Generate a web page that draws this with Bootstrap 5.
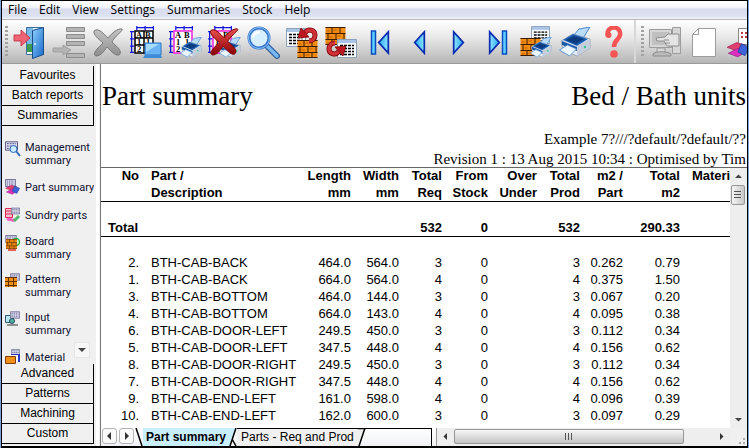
<!DOCTYPE html>
<html lang="en">
<head>
<meta charset="utf-8">
<meta name="viewport" content="width=device-width, initial-scale=1">
<title>Part summary</title>
<link href="https://cdn.jsdelivr.net/npm/bootstrap@5.3.0/dist/css/bootstrap.min.css" rel="stylesheet">
<style>
body{font-family:"Liberation Sans",Arial,sans-serif;font-size:13px;line-height:17px;color:#000;background:#000}
button{color:#000}
.app-frame{border:solid #7fa3d0;border-width:0 1px;background:#000;padding:1px 1px 2px}
.app-body{background:#f0f0f0}
.menu-bar{background:linear-gradient(#fff 0,#f4f6fb 35%,#d8dcee 45%,#dde2f2 85%,#f4f5fa 100%);border-bottom:1px solid #b8b8b8;font-family:"Open Sans","Noto Sans",sans-serif;font-size:12px;line-height:18px}
.menu-bar .btn{font:inherit;padding:0 6px;border:0;border-radius:0;color:#000}
.tool-bar{background:linear-gradient(#fff 0,#e9e9e9 40%,#b6b6b6 100%);height:44px;border-bottom:1px solid #9a9a9a}
.tool-bar .btn{width:39px;padding:2px 2px 0;border:0;border-radius:0;line-height:0;flex:none}
.tool-bar svg{width:34px;height:34px}
.grip{width:3px;height:32px;margin:0 1px 0 5px;background:repeating-linear-gradient(#a2a2a2 0 2px,transparent 2px 4px);flex:none}
.grip-first{margin-left:3px;margin-right:2px}
.bar-split{width:2px;background:#d8d8d8;flex:none}
.side-panel{width:93px;flex:none;padding:2px 0;border-right:1px solid #f0f0f0}
.side-panel .group-btn{font-size:12px;line-height:19px;text-align:center;background:#f0f0f0;border:0;border-bottom:1px solid #000;border-right:1px solid #000;padding:0;height:20px;flex:none}
.side-list{padding:15px 0 0 3px;gap:12px;background:#f0f0f0;min-height:0}
.side-list a{font-size:11px;line-height:13px;color:#101030;text-decoration:none;min-height:16px;gap:4px;flex:none;font-family:Roboto,"Liberation Sans",sans-serif;white-space:nowrap}
.side-list svg{width:16px;height:16px;flex:none}
.side-more{right:4px;bottom:6px;width:16px;height:16px;background:#f7f7f7;border:1px solid #e6e6e6;padding:0;line-height:0}
.splitter{width:6px;flex:none;background:linear-gradient(90deg,#f0f0f0 0 1px,#fff 1px 4px,#f0f0f0 4px);border-right:1px solid #777}
.report-head{font-family:"Liberation Serif","Times New Roman",serif;font-size:15px;line-height:20px;white-space:nowrap;padding:0 1px;margin-bottom:-2px}
.report-head h1{font-size:27px;line-height:33px;font-weight:400;margin:0}
.head-titles{padding:16px 0}
.report-body{border-top:1px solid #666;min-height:0}
.report-table{width:100%;table-layout:fixed;border-collapse:separate;border-spacing:0;text-align:right;white-space:nowrap;margin-top:-1px}
.report-table th,.report-table td{padding:0;line-height:17px}
.report-table .to-left{text-align:left;padding-left:12px}
.report-table thead th{border-bottom:1px solid #000}
.report-table .sum-row>*{padding-top:17px;border-bottom:1px solid #000;font-weight:700}
.report-table .sum-row th{text-align:left;padding-left:7px}
.report-table .first-row>*{padding-top:17px}
.scroll-v{width:17px;flex:none;background:#eee}
.scroll-btn{width:17px;height:17px;border:0;padding:0;background:none;line-height:0;flex:none}
.thumb{border:1px solid #979797;border-radius:2px;background:linear-gradient(90deg,#f6f6f6,#dedede 50%,#c8c8c8);padding:0;line-height:0}
.thumb-v{width:14px;height:20px;margin-left:1px}
.thumb-h{background:linear-gradient(#f6f6f6,#dcdcdc 50%,#c4c4c4);height:15px;margin:1px 29px 0 0}
.foot-row{height:18px;flex:none;background:#f0f0f0}
.sheet-nav{width:335px;flex:none;background:linear-gradient(#fff,#f0f2f6);font-size:12px}
.sheet-nav .step{width:15px;height:16px;border:1px solid #b4b4b4;border-radius:3px;background:#fafafa;padding:0;line-height:0;margin-left:1px;margin-right:1px}
.sheet-nav .tab-btn{border:0;padding:0 3px;font-size:12px;line-height:17px;background:#f0f0f0;white-space:nowrap}
.sheet-nav .tab-on{font-weight:700;background:#c9eefc}
.sheet-nav .tab-off{border-top:1px solid #000;padding:0 4px}
.sheet-end{border-top:1px solid #000;border-right:1px solid #000}
.slant{width:8px;height:18px;flex:none}
.scroll-h{min-width:0;border-left:1px solid #999;background:#eee}
.corner{width:17px;flex:none}
</style>
<script src="https://cdn.jsdelivr.net/npm/bootstrap@5.3.0/dist/js/bootstrap.bundle.min.js"></script>
</head>
<body>
<svg width="0" height="0" class="position-absolute" aria-hidden="true">
<defs>
<linearGradient id="gBlue" x1="0" y1="0" x2="1" y2="1"><stop offset="0" stop-color="#8fd0ff"/><stop offset="1" stop-color="#1668c8"/></linearGradient>
<linearGradient id="gArrow" x1="0" y1="0" x2="1" y2="0"><stop offset="0" stop-color="#28a8f4"/><stop offset="1" stop-color="#8ee6ff"/></linearGradient>
<linearGradient id="gGrey" x1="0" y1="0" x2="0" y2="1"><stop offset="0" stop-color="#c4c4c4"/><stop offset="1" stop-color="#8e8e8e"/></linearGradient>
<linearGradient id="gRed" x1="0" y1="0" x2="0" y2="1"><stop offset="0" stop-color="#e85050"/><stop offset="1" stop-color="#8c0000"/></linearGradient>
<symbol id="brick" viewBox="0 0 20 18"><path fill="#f08c14" d="M0 0h20v18H0z"/><path d="M0 .5h20M0 6.5h20M0 12.5h20M0 17.5h20M6.5 0v6M14.5 0v6M2.500 6v6M10.500 6v6M18.500 6v6M6.500 12v6M14.500 12v6" stroke="#3c1c00" fill="none"/><path d="M1 4h3M8 3h3M4 10h3M12 9h3M1 16h3M8 15h4" stroke="#c45e00"/></symbol>
<symbol id="sheet" viewBox="0 0 20 19"><path fill="#f8fbff" stroke="#8ca0b8" d="M.5.5h19v18H.5z"/><path fill="#a9c4e4" d="M1 1h18v3H1z"/><path d="M3 6.500h14M3 9.500h14M3 12.500h14M3 15.500h14" stroke="#000" stroke-width="1.500" stroke-dasharray="3 1"/></symbol>
<symbol id="printer" viewBox="0 0 32 30"><path fill="#b9dcfa" stroke="#4a88cc" d="M14 9 20 2l11-2-8 13z"/><path fill="#e4ecf6" stroke="#8a98aa" stroke-width=".8" d="m2 14 12-7 17 5v9L18 29 4 23z"/><path fill="#1b5fb0" d="m4 13 10-6 15 5-11 7z"/><path fill="#0c3c80" d="m7 13 8-4 10 3-8 5z"/><path fill="#c4cedc" d="m18 19 13-7v9l-13 8z"/><path fill="#1c58a4" d="m3 14 15 6v4L3 18z"/><path fill="#e9f5ff" stroke="#4a88cc" stroke-width=".8" d="m.5 23 8-5 9 4-7 7z"/><circle cx="26" cy="20" r="1.200" fill="#3c8"/></symbol>
<symbol id="grid2" viewBox="0 0 24 27"><path d="M6 1.500h17M6.500 0v4M14.500 0v4M22.500 0v4M1.500 5v21M0 5.500h4M0 12.500h4M0 19.500h4M0 25.500h4" stroke="#1414e0" stroke-width="1.200" fill="none"/></symbol>
<symbol id="letters" viewBox="0 0 20 22"><g font-family="Liberation Serif,serif" font-weight="700" font-size="8.500"><text x="2" y="7">A</text><text x="11" y="7">B</text><text x="3" y="14">1</text><text x="12" y="14">1</text><text x="3" y="21">2</text></g></symbol>
<symbol id="cross" viewBox="0 0 32 29"><path d="M2 3C6-1 12 6 16 10 20 5 26 0 30 1c2 1-8 8-10 13 4 4 10 8 8 12-3 4-9-3-13-7-3 4-6 9-11 9-5-2 3-9 7-13C7 11 1 7 2 3z"/></symbol>
<symbol id="tri" viewBox="0 0 13 26"><path fill="url(#gArrow)" stroke="#0a2cae" stroke-width="1.800" d="M11.500 2v22L1.500 13z"/></symbol>
<symbol id="curve" viewBox="0 0 20 18"><path d="M7 6C10 1 17 3 17 8c0 4-3 6-6 6" fill="none" stroke="#7c0808" stroke-width="5"/><path d="M7 6C10 1 17 3 17 8c0 4-3 6-6 6" fill="none" stroke="#d03038" stroke-width="3.400"/><path fill="#c01820" stroke="#7c0808" stroke-width=".8" d="M0 11 3 1l8 9z"/></symbol>
<symbol id="mini" viewBox="0 0 14 10"><path fill="#e4e4f8" stroke="#505078" d="M.5.5h13v9H.5z"/><path d="M2 2.500h10M2 5h10M2 7.500h10" stroke="#404070" stroke-dasharray="2 1"/></symbol>
<symbol id="books" viewBox="0 0 20 16"><path fill="#e04070" stroke="#9c2050" stroke-width=".6" d="m0 7 8-4 7 2-7 5z"/><path fill="#e030c0" stroke="#8c1c80" stroke-width=".6" d="m1 12 8-4 8 2-8 5z"/><path fill="#3c64d8" stroke="#203c90" stroke-width=".6" d="m12 4 7 3-4 7-6-3z"/></symbol>
</defs>
</svg>

<div class="app-frame vh-100 overflow-hidden">
<div class="app-body h-100 d-flex flex-column overflow-hidden">

<nav class="menu-bar d-flex" aria-label="Main menu">
<button class="btn" type="button">File</button>
<button class="btn" type="button">Edit</button>
<button class="btn" type="button">View</button>
<button class="btn" type="button">Settings</button>
<button class="btn" type="button">Summaries</button>
<button class="btn" type="button">Stock</button>
<button class="btn" type="button">Help</button>
</nav>

<div class="tool-bar d-flex align-items-center overflow-hidden flex-shrink-0" role="toolbar" aria-label="Tools">
<span class="grip grip-first"></span>
<button class="btn" type="button" aria-label="Exit"><svg viewBox="0 0 34 34"><path fill="#e9f4ff" stroke="#3a6c9c" d="M13.500 1.500h17v27h-17z"/><path fill="#78b8e8" d="M14 2h6v16h-6z"/><path fill="#3c9c50" d="M14 18h5v8h-5z"/><path fill="url(#gBlue)" stroke="#174f86" d="m19.500 4.500 11-3v27l-11 4z"/><circle cx="22" cy="18" r="1" fill="#e0f0ff"/><path fill="#ee6474" stroke="#c83c4c" d="M1 9h7V4l9 8-9 8v-5H1z"/></svg></button>
<button class="btn" type="button" aria-label="Insert"><svg viewBox="0 0 34 34"><g fill="#b4b4b4" stroke="#8c8c8c"><path d="M14.500 1.500h18v4h-18zM14.500 8.500h18v4h-18zM14.500 15.500h18v4h-18zM14.500 27.500h18v4h-18z"/></g><path fill="#b4b4b4" stroke="#a0a0a0" d="M1 22h10v-3l8 5-8 5v-3H1z"/></svg></button>
<button class="btn" type="button" aria-label="Delete"><svg viewBox="0 0 34 34"><use href="#cross" x="1" y="2" width="32" height="29" fill="url(#gGrey)" stroke="#787878"/></svg></button>
<button class="btn" type="button" aria-label="View parts"><svg viewBox="0 0 34 34"><use href="#grid2" x="0" y="0" width="25" height="28"/><path fill="#fff" stroke="#000" stroke-width="1.500" d="M5 5h18v22H5zM14 5v22M5 12h18M5 19h18"/><use href="#letters" x="4" y="5" width="20" height="22"/><path fill="#6bb4f4" stroke="#2a78c8" d="M15 17h16v12H15z"/><path fill="#a8dcff" d="m16 18h13L16 26z"/><path fill="#3c8cd8" d="m15 29h16l1 3H13z"/></svg></button>
<button class="btn" type="button" aria-label="Print parts"><svg viewBox="0 0 34 34"><use href="#grid2" x="0" y="0" width="25" height="28"/><path fill="#fff" stroke="#f020e0" stroke-width="1.500" d="M5 5h18v22H5z"/><use href="#letters" x="4" y="5" width="20" height="22"/><use href="#printer" x="11" y="11" width="22" height="21"/></svg></button>
<button class="btn" type="button" aria-label="Cancel print"><svg viewBox="0 0 34 34"><use href="#grid2" x="0" y="0" width="25" height="28"/><path fill="#fff" stroke="#f020e0" stroke-width="1.500" d="M5 5h18v22H5z"/><use href="#letters" x="4" y="5" width="20" height="22"/><use href="#printer" x="11" y="11" width="22" height="21"/><use href="#cross" x="0" y="2" width="32" height="28" fill="url(#gRed)" stroke="#780000"/></svg></button>
<button class="btn" type="button" aria-label="Find"><svg viewBox="0 0 34 34"><path d="m19 19 11 11" stroke="#2c5c9c" stroke-width="6" stroke-linecap="round"/><path d="m19 19 11 11" stroke="#78b8f0" stroke-width="3.500" stroke-linecap="round"/><circle cx="12" cy="12" r="10" fill="#d8efff" stroke="#3474cc" stroke-width="3"/><circle cx="12" cy="12" r="10.500" fill="none" stroke="#8cc4f8"/><path d="M6 11c1-4 4-5 7-5" stroke="#fff" stroke-width="2.500" fill="none"/></svg></button>
<button class="btn" type="button" aria-label="List to pattern"><svg viewBox="0 0 34 34"><use href="#sheet" x="0" y="2" width="20" height="19"/><use href="#brick" x="11" y="14" width="21" height="18"/><use href="#curve" x="12" y="1" width="20" height="18"/></svg></button>
<button class="btn" type="button" aria-label="Pattern to list"><svg viewBox="0 0 34 34"><use href="#brick" x="0" y="1" width="21" height="18"/><use href="#sheet" x="12" y="13" width="20" height="19"/><use href="#curve" x="1" y="13" width="20" height="18" transform="rotate(180 11 22)"/></svg></button>
<button class="btn" type="button" aria-label="First"><svg viewBox="0 0 34 34"><path fill="#5cd0ff" stroke="#0a4cc0" stroke-width="1.500" d="M7.500 5h4v23h-4z"/><use href="#tri" x="13" y="4" width="13" height="25"/></svg></button>
<button class="btn" type="button" aria-label="Previous"><svg viewBox="0 0 34 34"><use href="#tri" x="10" y="4" width="13" height="25"/></svg></button>
<button class="btn" type="button" aria-label="Next"><svg viewBox="0 0 34 34"><use href="#tri" x="10" y="4" width="13" height="25" transform="rotate(180 16.500 16.500)"/></svg></button>
<button class="btn" type="button" aria-label="Last"><svg viewBox="0 0 34 34"><use href="#tri" x="13" y="4" width="13" height="25" transform="rotate(180 16.500 16.500)"/><path fill="#5cd0ff" stroke="#0a4cc0" stroke-width="1.500" d="M21.500 5h4v23h-4z"/></svg></button>
<button class="btn" type="button" aria-label="Print pattern"><svg viewBox="0 0 34 34"><use href="#sheet" x="10" y="0" width="21" height="18"/><use href="#brick" x="0" y="12" width="21" height="18"/><use href="#printer" x="10" y="11" width="22" height="21"/></svg></button>
<button class="btn" type="button" aria-label="Print"><svg viewBox="0 0 34 34"><use href="#printer" x="0" y="1" width="32" height="30"/></svg></button>
<button class="btn" type="button" aria-label="Help topics"><svg viewBox="0 0 34 34"><path d="M10 10c-3-11 14-11 12-1-1 5-6 5-6 12" fill="none" stroke="#f85454" stroke-width="4.500"/><circle cx="10.500" cy="9" r="3" fill="#f85454"/><circle cx="16" cy="28" r="3.800" fill="#f85454"/></svg></button>
<span class="bar-split align-self-stretch"></span>
<span class="grip"></span>
<button class="btn" type="button" aria-label="Screen"><svg viewBox="0 0 34 34"><path fill="#d6d6d6" stroke="#9c9c9c" d="M1.500 3.500h22v18h-22zM24.500 1.500h8v26h-8zM9 22h8v5H9z"/><path fill="#c0c0c0" d="M4 6h17v13H4z"/><path fill="#bbb" stroke="#8c8c8c" d="M5 28c2-3 14-3 18 0v2H5z"/><path fill="#e4e4e4" stroke="#8c8c8c" d="m8 12 9-1 3-3h11v12H19l-3-5H9z"/><path d="M16 14h5M17 17h5" stroke="#8c8c8c"/></svg></button>
<button class="btn" type="button" aria-label="New page"><svg viewBox="0 0 34 34"><path fill="#fff" stroke="#9c9c9c" d="M11.500 2.500h17v28h-23v-22zM11.500 2.500v6h-6"/></svg></button>
<button class="btn" type="button" aria-label="Library"><svg viewBox="0 0 34 34"><path fill="#fff" stroke="#888" d="M12.500 2.500h18v16h-18z"/><path d="M15 7h12M15 11h12" stroke="#c03c3c" stroke-width="2" stroke-dasharray="2 2"/><use href="#books" x="1" y="13" width="24" height="19"/></svg></button>
</div>

<div class="d-flex flex-grow-1 overflow-hidden">
<aside class="side-panel d-flex flex-column">
<button class="group-btn" type="button">Favourites</button>
<button class="group-btn" type="button">Batch reports</button>
<button class="group-btn" type="button">Summaries</button>
<div class="side-list d-flex flex-column flex-grow-1 overflow-hidden position-relative">
<a class="d-flex" href="#"><svg viewBox="0 0 16 16"><use href="#mini" x="0" width="13" height="10"/><circle cx="8.500" cy="8" r="3.500" fill="#c8ecff" stroke="#2c6cb8"/><path d="m11 10 4 5" stroke="#2c6cb8" stroke-width="2"/></svg><span>Management<br>summary</span></a>
<a class="d-flex align-items-center" href="#"><svg viewBox="0 0 16 16"><use href="#mini" x="0" width="11" height="8"/><use href="#books" y="4" width="16" height="12"/></svg><span>Part summary</span></a>
<a class="d-flex align-items-center" href="#"><svg viewBox="0 0 16 16"><path fill="#f8c0d0" stroke="#d82850" d="M.5 1.500h7v9h-7z"/><path d="M2 3v6M4 3v6M6 3v6" stroke="#d82850" stroke-dasharray="2 1"/><use href="#mini" x="6" width="9" height="8"/><path d="M2 13c4-3 6 3 8-1" stroke="#f060c0" stroke-width="3" fill="none"/><path d="m9 14 5-5" stroke="#50b868" stroke-width="3"/></svg><span>Sundry parts</span></a>
<a class="d-flex" href="#"><svg viewBox="0 0 16 16"><use href="#mini" width="12" height="8"/><circle cx="11" cy="7" r="3.500" fill="#d4ffd4" stroke="#30b040" stroke-width="1.500"/><use href="#brick" x="1" y="4" width="11" height="10"/><path d="M3 15h8" stroke="#e03020" stroke-width="1.500"/></svg><span>Board<br>summary</span></a>
<a class="d-flex" href="#"><svg viewBox="0 0 16 16"><use href="#mini" x="5" width="10" height="8"/><path fill="#f09018" d="M0 4h12v10H0z"/><path d="M0 4.500h12M0 8.500h12M0 12.500h12M3.500 4v10M8.500 4v10" stroke="#603000"/></svg><span>Pattern<br>summary</span></a>
<a class="d-flex" href="#"><svg viewBox="0 0 16 16"><path fill="#b8e8f0" stroke="#305878" d="M.5 4.500h8v7h-8z"/><use href="#mini" x="5" width="10" height="8"/><circle cx="7" cy="10" r="2.500" fill="#50b0a0" stroke="#284868"/><path d="M2 14h11" stroke="#909090" stroke-width="2"/></svg><span>Input<br>summary</span></a>
<a class="d-flex align-items-center" href="#"><svg viewBox="0 0 16 16"><use href="#mini" x="6" width="9" height="7"/><path fill="#2838c0" d="M6 5h9v8H6z"/><path fill="#fff" d="M5 6h8v7H5z"/><path fill="#f09018" stroke="#804000" d="M.5 7.500h10v7H.5z"/></svg><span>Material</span></a>
<button class="side-more position-absolute" type="button" aria-label="More"><svg width="14" height="14"><path fill="#444" d="M3 5h8l-4 4z"/></svg></button>
</div>
<button class="group-btn" type="button">Advanced</button>
<button class="group-btn" type="button">Patterns</button>
<button class="group-btn" type="button">Machining</button>
<button class="group-btn" type="button">Custom</button>
</aside>
<div class="splitter"></div>

<main class="d-flex flex-column flex-grow-1 overflow-hidden bg-white">
<header class="report-head flex-shrink-0">
<div class="head-titles d-flex justify-content-between"><h1>Part summary</h1><h1>Bed / Bath units</h1></div>
<div class="text-end">Example 7?///?default/?default/??</div>
<div class="text-end">Revision 1 : 13 Aug 2015 10:34 : Optimised by Tim</div>
</header>

<div class="report-body d-flex flex-grow-1 overflow-hidden">
<div class="flex-grow-1 overflow-hidden">
<table class="report-table">
<colgroup><col style="width:38px"><col><col style="width:48px"><col style="width:48px"><col style="width:43px"><col style="width:46px"><col style="width:49px"><col style="width:43px"><col style="width:43px"><col style="width:57px"><col style="width:50px"></colgroup>
<thead><tr><th class="align-top">No</th><th class="to-left">Part /<br>Description</th><th>Length<br>mm</th><th>Width<br>mm</th><th>Total<br>Req</th><th>From<br>Stock</th><th>Over<br>Under</th><th>Total<br>Prod</th><th>m2 /<br>Part</th><th>Total<br>m2</th><th class="to-left align-top">Materi</th></tr></thead>
<tbody>
<tr class="sum-row"><th colspan="2">Total</th><td></td><td></td><td>532</td><td>0</td><td></td><td>532</td><td></td><td>290.33</td><td></td></tr>
<tr class="first-row"><td>2.</td><td class="to-left">BTH-CAB-BACK</td><td>464.0</td><td>564.0</td><td>3</td><td>0</td><td></td><td>3</td><td>0.262</td><td>0.79</td><td></td></tr>
<tr><td>1.</td><td class="to-left">BTH-CAB-BACK</td><td>664.0</td><td>564.0</td><td>4</td><td>0</td><td></td><td>4</td><td>0.375</td><td>1.50</td><td></td></tr>
<tr><td>3.</td><td class="to-left">BTH-CAB-BOTTOM</td><td>464.0</td><td>144.0</td><td>3</td><td>0</td><td></td><td>3</td><td>0.067</td><td>0.20</td><td></td></tr>
<tr><td>4.</td><td class="to-left">BTH-CAB-BOTTOM</td><td>664.0</td><td>143.0</td><td>4</td><td>0</td><td></td><td>4</td><td>0.095</td><td>0.38</td><td></td></tr>
<tr><td>6.</td><td class="to-left">BTH-CAB-DOOR-LEFT</td><td>249.5</td><td>450.0</td><td>3</td><td>0</td><td></td><td>3</td><td>0.112</td><td>0.34</td><td></td></tr>
<tr><td>5.</td><td class="to-left">BTH-CAB-DOOR-LEFT</td><td>347.5</td><td>448.0</td><td>4</td><td>0</td><td></td><td>4</td><td>0.156</td><td>0.62</td><td></td></tr>
<tr><td>8.</td><td class="to-left">BTH-CAB-DOOR-RIGHT</td><td>249.5</td><td>450.0</td><td>3</td><td>0</td><td></td><td>3</td><td>0.112</td><td>0.34</td><td></td></tr>
<tr><td>7.</td><td class="to-left">BTH-CAB-DOOR-RIGHT</td><td>347.5</td><td>448.0</td><td>4</td><td>0</td><td></td><td>4</td><td>0.156</td><td>0.62</td><td></td></tr>
<tr><td>9.</td><td class="to-left">BTH-CAB-END-LEFT</td><td>161.0</td><td>598.0</td><td>4</td><td>0</td><td></td><td>4</td><td>0.096</td><td>0.39</td><td></td></tr>
<tr><td>10.</td><td class="to-left">BTH-CAB-END-LEFT</td><td>162.0</td><td>600.0</td><td>3</td><td>0</td><td></td><td>3</td><td>0.097</td><td>0.29</td><td></td></tr>
</tbody>
</table>
</div>
<div class="scroll-v d-flex flex-column">
<button class="scroll-btn" type="button" aria-label="Scroll up"><svg width="17" height="17"><path fill="#444" d="M5 10h7L8.500 6.500z"/></svg></button>
<button class="thumb thumb-v" type="button" aria-label="Vertical position"><svg width="12" height="18"><path d="M2 5.500h7M2 8.500h7M2 11.500h7" stroke="#555"/></svg></button>
<button class="scroll-btn mt-auto" type="button" aria-label="Scroll down"><svg width="17" height="17"><path fill="#444" d="M5 7h7l-3.500 3.500z"/></svg></button>
</div>
</div>

<div class="foot-row d-flex">
<div class="sheet-nav d-flex">
<button class="step" type="button" aria-label="Previous sheet"><svg width="13" height="14"><path fill="#333" d="M8 3v8L4 7z"/></svg></button>
<button class="step" type="button" aria-label="Next sheet"><svg width="13" height="14"><path fill="#333" d="M5 3v8l4-4z"/></svg></button>
<svg class="slant" viewBox="0 0 8 18"><path d="m1 0 6 18" stroke="#000" stroke-width="1.500"/></svg>
<button class="tab-btn tab-on" type="button">Part summary</button>
<svg class="slant" viewBox="0 0 8 18"><path fill="#c9eefc" d="M0 0h7L1 18H0z"/><path d="m7 0-6 18M3 11l4 7" stroke="#000" stroke-width="1.500"/></svg>
<button class="tab-btn tab-off" type="button">Parts - Req and Prod</button>
<svg class="slant" viewBox="0 0 8 18"><path fill="#f0f0f0" d="M0 0h7L1 18H0z"/><path d="M0 .500h8M7 0 1 18" fill="none" stroke="#000" stroke-width="1.500"/></svg>
<span class="sheet-end flex-grow-1 me-1"></span>
</div>
<div class="scroll-h d-flex flex-grow-1">
<button class="scroll-btn" type="button" aria-label="Scroll left"><svg width="17" height="17"><path fill="#333" d="M10 5v7L6.500 8.500z"/></svg></button>
<button class="thumb thumb-h flex-grow-1" type="button" aria-label="Horizontal position"><svg width="12" height="13"><path d="M2.500 3v7M5.500 3v7M8.500 3v7" stroke="#555"/></svg></button>
<button class="scroll-btn" type="button" aria-label="Scroll right"><svg width="17" height="17"><path fill="#333" d="M7 5v7l3.500-3.500z"/></svg></button>
</div>
<div class="corner"><svg width="17" height="18"><path d="M9 14h2m2 0h2M13 10h2" stroke="#aaa" stroke-width="2"/></svg></div>
</div>
</main>
</div>
</div>
</div>
</body>
</html>
